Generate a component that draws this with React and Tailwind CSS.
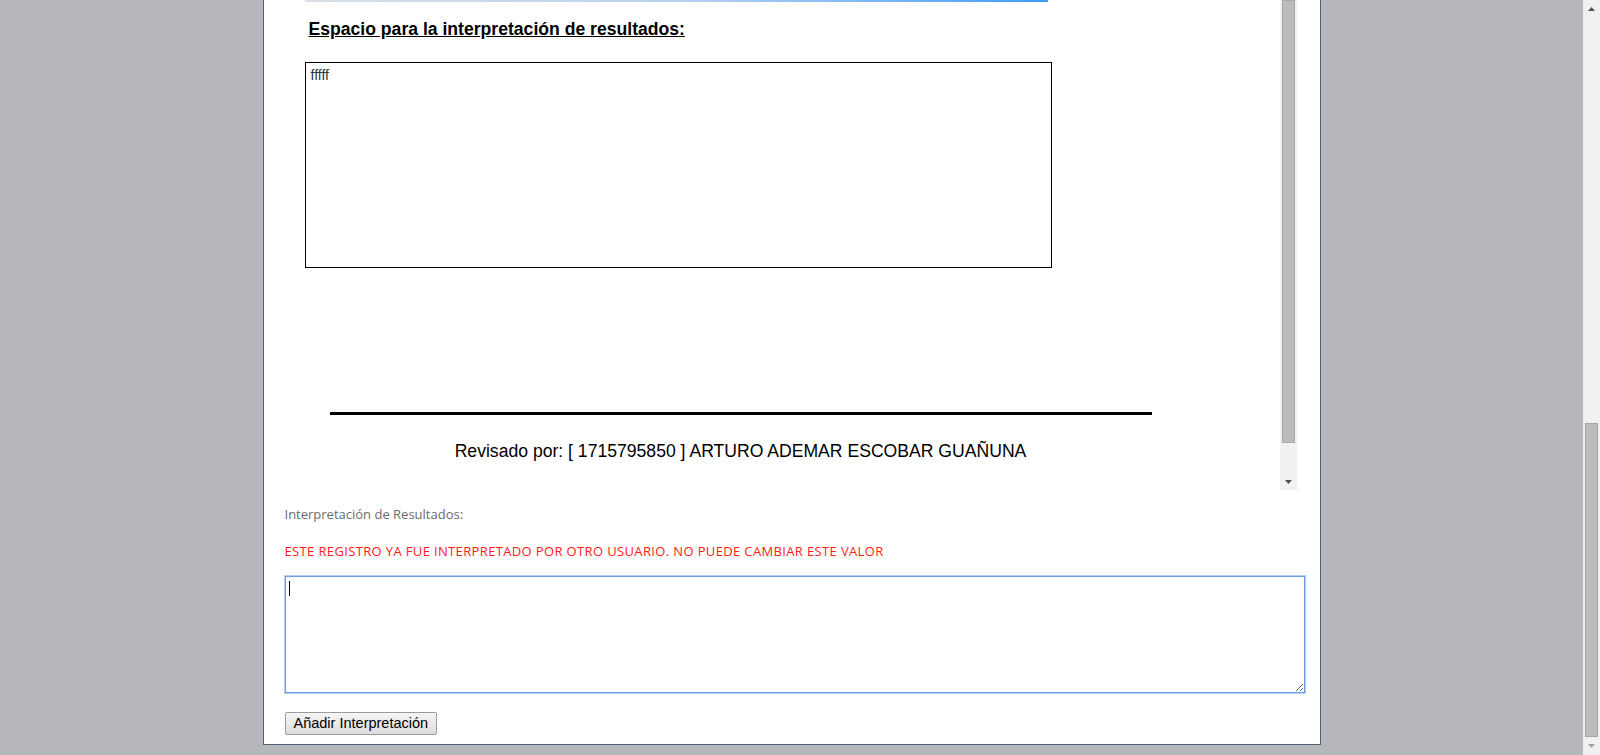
import React from "react";

const arial = { fontFamily: '"Liberation Sans", Arial, sans-serif' };
const segoe = { fontFamily: '"Open Sans", "Noto Sans", sans-serif' };

// tiny scrollbar arrow
const Arrow = ({ up, color }) => (
  <svg width="7" height="4" viewBox="0 0 7 4">
    <polygon points={up ? "0,4 7,4 3.5,0" : "0,0 7,0 3.5,4"} fill={color} />
  </svg>
);

const ReportFrame = () => {
  return (
    <div className="ml-[20px] w-[1013px] h-[490px] flex bg-white">
      <div className="flex-1 overflow-hidden" style={arial}>
        {/* bottom edge of the chart above */}
        <div className="ml-[21px] w-[743px] h-[2px] bg-gradient-to-r from-[#d9dfe6] via-[#b9d2ee] to-[#3d9bff]" />

        <h2 className="mt-[17px] ml-[25px] text-[17.6px] leading-[21px] font-bold underline text-black">
          Espacio para la interpretación de resultados:
        </h2>

        <div className="mt-[22px] ml-[21px] w-[747px] h-[206px] border border-black pt-[4px] pl-[5px] text-[14px] leading-[16px] text-[#2b3440]">
          fffff
        </div>

        {/* firma */}
        <div className="mt-[144px] w-[914px] text-center">
          <div className="mx-auto w-[822px] h-[3px] bg-black" />
          <p className="mt-[25px] text-[17.6px] leading-[22px] text-black">
            Revisado por: [ 1715795850 ] ARTURO ADEMAR ESCOBAR GUAÑUNA
          </p>
        </div>
      </div>

      {/* inner scrollbar */}
      <div className="w-[17px] bg-[#f1f1f1] flex flex-col">
        <div className="mx-[2px] h-[443px] bg-[#bcbcbc] border border-[#a8a8a8]" />
        <div className="flex-1" />
        <div className="h-[17px] flex items-center justify-center">
          <Arrow color="#505050" />
        </div>
      </div>
    </div>
  );
};

export default function App() {
  return (
    <div className="h-screen w-full flex bg-[#b6b7bb] overflow-hidden">
      <div className="flex-1 flex justify-center">
        <div className="w-[1058px] h-[745px] bg-white border-x border-b border-[#4d5e77] flex flex-col">
          <ReportFrame />

          <div className="pl-[21px] pr-[15px]">
            <p className="mt-[15px] text-[13px] leading-[18px] text-[#6b6b6b]" style={segoe}>
              Interpretación de Resultados:
            </p>
            <p className="mt-[19px] text-[13px] leading-[18px] tracking-[0.36px] text-[#ff1a1a]" style={segoe}>
              ESTE REGISTRO YA FUE INTERPRETADO POR OTRO USUARIO. NO PUEDE CAMBIAR ESTE VALOR
            </p>
            <div className="relative mt-[16px] w-[1020px]">
              <textarea
                className="block w-[1020px] h-[117px] border border-[#6f9ce9] shadow-[0_0_0_1px_#b7cff6] outline-none px-[4px] py-[3px] text-[13px] resize"
                style={arial}
                defaultValue=""
              />
              {/* text caret */}
              <span className="absolute left-[4px] top-[5px] w-px h-[15px] bg-black" />
            </div>
            <button
              className="mt-[19px] h-[23px] px-[8px] text-[14.5px] leading-[21px] text-black border border-[#9c9c9c] rounded-[2px] bg-gradient-to-b from-[#f6f6f6] to-[#dddddd]"
              style={arial}
            >
              Añadir Interpretación
            </button>
          </div>
        </div>
      </div>

      {/* page scrollbar */}
      <div className="w-[17px] h-full bg-[#f0f0f0] flex flex-col">
        <div className="h-[17px] flex items-center justify-center">
          <Arrow up color="#505050" />
        </div>
        <div className="h-[406px]" />
        <div className="mx-[2px] h-[314px] bg-[#bcbcbc] border border-[#a3a3a3]" />
        <div className="flex-1 flex items-center justify-center">
          <Arrow color="#a3a3a3" />
        </div>
      </div>
    </div>
  );
}
